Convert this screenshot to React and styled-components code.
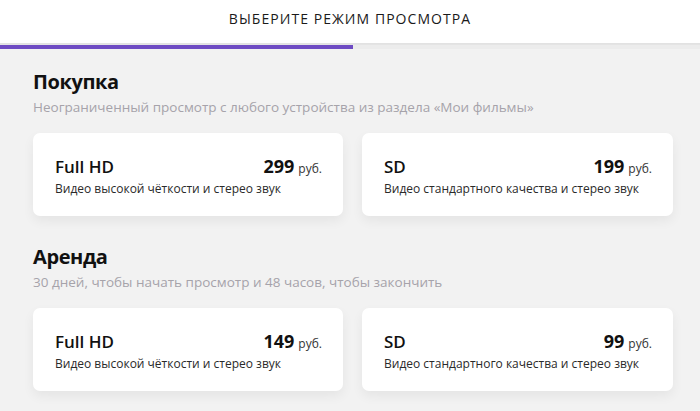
import React from "react";
import styled, { createGlobalStyle } from "styled-components";

const Global = createGlobalStyle`
  html, body { margin: 0; padding: 0; }
  body {
    background: #f2f2f2;
    font-family: "Open Sans", "Noto Sans", sans-serif;
    color: #111;
    width: 700px;
    height: 411px;
    overflow: hidden;
  }
`;

const Page = styled.div`
  display: flex;
  flex-direction: column;
`;

const Header = styled.header`
  height: 44px;
  background: #fff;
  border-bottom: 1px solid #e2e2e2;
  box-sizing: border-box;
  display: flex;
  justify-content: center;
  padding-top: 9px;
`;

const HeaderTitle = styled.h1`
  margin: 0;
  font-size: 14px;
  line-height: 20px;
  font-weight: 400;
  letter-spacing: 1.05px;
  color: #1a1a1a;
  text-transform: uppercase;
`;

const Track = styled.div`
  height: 5px;
  background: #ececec;
  border-top: 1px solid #e4e4e4;
  box-sizing: border-box;
  display: flex;
`;

const Fill = styled.div`
  background: #6e4bc3;
  height: 100%;
`;

const Main = styled.main`
  padding: 20px 27px 0 33px;
  display: flex;
  flex-direction: column;
`;

const Section = styled.section`
  display: flex;
  flex-direction: column;
  & + & { margin-top: 28px; }
`;

const SectionTitle = styled.h2`
  margin: 0;
  font-size: 20px;
  line-height: 26px;
  font-weight: 700;
  letter-spacing: -0.4px;
  color: #111;
`;

const SectionNote = styled.p`
  margin: 2px 0 0;
  font-size: 13.5px;
  line-height: 20px;
  color: #a6a3aa;
`;

const Cards = styled.div`
  display: grid;
  grid-template-columns: 310px 311px;
  gap: 19px;
  margin-top: 16px;
`;

const Card = styled.div`
  background: #fff;
  border-radius: 7px;
  box-shadow: 0 5px 12px rgba(0, 0, 0, 0.06);
  padding: 22px 21px 22px 22px;
  height: 83px;
  box-sizing: border-box;
  display: flex;
  flex-direction: column;
`;

const CardTop = styled.div`
  display: flex;
  justify-content: space-between;
  align-items: baseline;
`;

const Quality = styled.span`
  font-size: 17px;
  line-height: 22px;
  font-weight: 600;
  color: #111;
`;

const Price = styled.span`
  font-size: 18px;
  line-height: 22px;
  font-weight: 700;
  color: #111;
`;

const Currency = styled.span`
  font-size: 12px;
  font-weight: 400;
  color: #333;
  margin-left: 4px;
`;

const Desc = styled.div`
  font-size: 12px;
  line-height: 17px;
  color: #2a2a2a;
`;

const sections = [
  {
    title: "Покупка",
    note: "Неограниченный просмотр с любого устройства из раздела «Мои фильмы»",
    items: [
      { q: "Full HD", price: 299, desc: "Видео высокой чёткости и стерео звук" },
      { q: "SD", price: 199, desc: "Видео стандартного качества и стерео звук" },
    ],
  },
  {
    title: "Аренда",
    note: "30 дней, чтобы начать просмотр и 48 часов, чтобы закончить",
    items: [
      { q: "Full HD", price: 149, desc: "Видео высокой чёткости и стерео звук" },
      { q: "SD", price: 99, desc: "Видео стандартного качества и стерео звук" },
    ],
  },
];

export default function App() {
  const progress = 50.4;
  return (
    <Page>
      <Global />
      <Header>
        <HeaderTitle>Выберите режим просмотра</HeaderTitle>
      </Header>
      <Track>
        <Fill style={{ width: `${progress}%` }} />
      </Track>
      <Main>
        {sections.map((s) => (
          <Section key={s.title}>
            <SectionTitle>{s.title}</SectionTitle>
            <SectionNote>{s.note}</SectionNote>
            <Cards>
              {s.items.map((it) => (
                <Card key={it.q}>
                  <CardTop>
                    <Quality>{it.q}</Quality>
                    <Price>
                      {it.price}
                      <Currency>руб.</Currency>
                    </Price>
                  </CardTop>
                  <Desc>{it.desc}</Desc>
                </Card>
              ))}
            </Cards>
          </Section>
        ))}
      </Main>
    </Page>
  );
}
